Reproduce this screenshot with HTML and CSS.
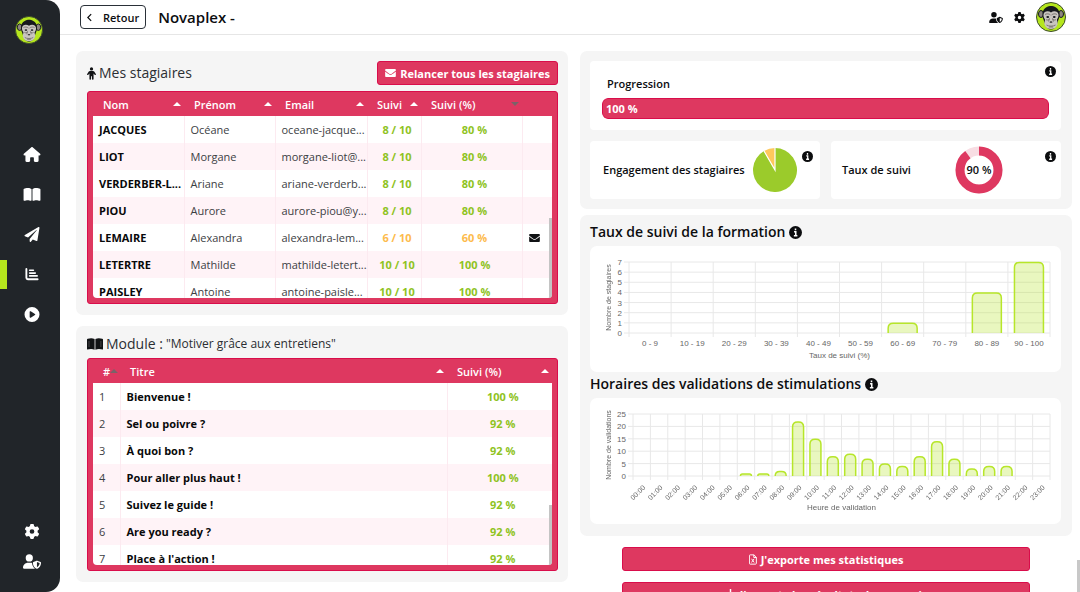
FILE: index.html
```html
<!DOCTYPE html>
<html lang="fr">
<head>
<meta charset="utf-8">
<title>Novaplex - Statistiques</title>
<meta name="viewport" content="width=device-width, initial-scale=1">
<link rel="stylesheet" href="styles.css">
</head>
<body>
<svg class="sprite" aria-hidden="true">
  <symbol id="i-home" viewBox="0 0 576 512"><path d="M575.8 255.5c0 18-15 32.1-32 32.1h-32l.7 160.2c0 2.7-.2 5.4-.5 8.1V472c0 22.1-17.9 40-40 40H392c-22.1 0-40-17.9-40-40V384c0-17.7-14.3-32-32-32H256c-17.7 0-32 14.3-32 32v88c0 22.1-17.9 40-40 40H104c-22.1 0-40-17.9-40-40V287.600H32c-18 0-32-14-32-32.100c0-9 3-17 10-24L266.400 8c7-7 15-8 22-8s15 2 21 7L564.800 231.500c8 7 12 15 11 24z"/></symbol>
  <symbol id="i-book" viewBox="0 0 576 512"><path d="M249.600 471.500c10.800 3.800 22.400-4.100 22.400-15.500V78.600c0-4.200-1.600-8.400-5-11C247.400 52 202.400 32 144 32C93.500 32 46.300 45.300 18.100 56.100C6.800 60.500 0 71.700 0 83.800V454.100c0 11.900 12.800 20.200 24.100 16.500C55.600 460.100 105.500 448 144 448c33.900 0 79 14 105.600 23.500zm76.800 0C353 462 398.100 448 432 448c38.500 0 88.400 12.100 119.900 22.600c11.300 3.800 24.100-4.600 24.100-16.500V83.800c0-12.100-6.800-23.300-18.100-27.600C529.700 45.300 482.500 32 432 32c-58.400 0-103.400 20-123 35.600c-3.300 2.600-5 6.800-5 11V456c0 11.400 11.700 19.300 22.400 15.500z"/></symbol>
  <symbol id="i-plane" viewBox="0 0 512 512"><path d="M476 3.200L12.500 270.600c-18.100 10.400-15.800 35.600 2.200 43.200L121 358.400l287.300-253.200c5.500-4.900 13.300 2.600 8.600 8.300L176 407v80.500c0 23.600 28.500 32.900 42.500 15.800L282 426l124.600 52.200c14.200 6 30.400-2.900 33-18.200l72-432C515 7.800 493.300-6.800 476 3.200z"/></symbol>
  <symbol id="i-chart" viewBox="0 0 16 16"><path d="M2 2v9.500a1.500 1.500 0 0 0 1.500 1.500H14" fill="none" stroke="currentColor" stroke-width="2" stroke-linecap="round"/><path d="M5.500 3.500h4M5.500 6.500h6M5.500 9.500h8" fill="none" stroke="currentColor" stroke-width="1.700" stroke-linecap="round"/></symbol>
  <symbol id="i-play" viewBox="0 0 512 512"><path fill-rule="evenodd" d="M0 256a256 256 0 1 1 512 0A256 256 0 1 1 0 256zM188.300 147.100c-7.600 4.200-12.300 12.300-12.300 20.900V344c0 8.700 4.700 16.700 12.300 20.900s16.800 4.100 24.300-.5l144-88c7.100-4.400 11.500-12.100 11.500-20.500s-4.400-16.100-11.500-20.500l-144-88c-7.400-4.500-16.700-4.700-24.300-.5z"/></symbol>
  <symbol id="i-gear" viewBox="0 0 512 512"><path fill-rule="evenodd" d="M495.900 166.600c3.200 8.700 .5 18.400-6.400 24.600l-43.300 39.400c1.100 8.300 1.700 16.800 1.700 25.400s-.6 17.100-1.700 25.400l43.300 39.400c6.900 6.200 9.600 15.900 6.400 24.600c-4.400 11.900-9.700 23.300-15.800 34.300l-4.700 8.100c-6.600 11-14 21.400-22.100 31.200c-5.900 7.200-15.700 9.600-24.500 6.800l-55.700-17.700c-13.400 10.300-28.200 18.900-44 25.400l-12.500 57.100c-2 9.100-9 16.300-18.200 17.800c-13.800 2.300-28 3.500-42.500 3.500s-28.700-1.200-42.500-3.500c-9.200-1.500-16.200-8.700-18.200-17.800l-12.500-57.100c-15.800-6.500-30.600-15.100-44-25.400L83.100 425.900c-8.800 2.800-18.600 .3-24.500-6.800c-8.100-9.800-15.500-20.200-22.100-31.200l-4.700-8.100c-6.100-11-11.400-22.400-15.800-34.300c-3.200-8.700-.5-18.400 6.400-24.600l43.300-39.400C64.600 273.100 64 264.600 64 256s.6-17.100 1.700-25.400L22.400 191.200c-6.900-6.200-9.600-15.900-6.400-24.600c4.400-11.900 9.700-23.300 15.800-34.300l4.700-8.100c6.600-11 14-21.400 22.100-31.200c5.900-7.200 15.700-9.600 24.500-6.800l55.700 17.700c13.400-10.300 28.200-18.900 44-25.400l12.500-57.100c2-9.100 9-16.300 18.200-17.800C227.300 1.200 241.500 0 256 0s28.700 1.200 42.500 3.500c9.200 1.500 16.200 8.700 18.200 17.800l12.500 57.100c15.800 6.500 30.600 15.100 44 25.400l55.700-17.700c8.800-2.800 18.600-.3 24.500 6.800c8.100 9.800 15.500 20.200 22.100 31.200l4.700 8.100c6.100 11 11.400 22.400 15.800 34.300zM256 336a80 80 0 1 0 0-160 80 80 0 1 0 0 160z"/></symbol>
  <symbol id="i-shield" viewBox="0 0 640 512"><path fill-rule="evenodd" d="M224 256A128 128 0 1 0 224 0a128 128 0 1 0 0 256zm-45.700 48C79.800 304 0 383.800 0 482.300C0 498.700 13.300 512 29.700 512H418.300c1.800 0 3.500-.2 5.300-.5c-76.300-55.100-99.800-141-103.100-200.200c-16.100-4.800-33.100-7.300-50.700-7.300H178.300zm308.800-78.300l-120 48C358 277.400 352 286.200 352 296c0 63.300 25.900 168.800 134.800 214.200c5.900 2.500 12.600 2.500 18.500 0C614.100 464.800 640 359.300 640 296c0-9.800-6-18.600-15.100-22.300l-120-48c-5.700-2.300-12.100-2.300-17.800 0zM591.400 312c-3.900 50.700-27.200 116.700-95.400 149.700V273.800L591.400 312z"/></symbol>
  <symbol id="i-mail" viewBox="0 64 512 384"><path d="M502.300 190.800c3.900-3.100 9.700-.2 9.700 4.700V400c0 26.500-21.500 48-48 48H48c-26.500 0-48-21.500-48-48V195.600c0-5 5.700-7.800 9.700-4.700 22.400 17.400 52.100 39.500 154.100 113.600 21.100 15.400 56.700 47.800 92.200 47.600 35.700.3 72-32.800 92.300-47.600 102-74.100 131.600-96.300 154-113.700zM256 320c23.200.4 56.600-29.200 73.400-41.400 132.700-96.300 142.800-104.700 173.400-128.700 5.800-4.500 9.200-11.500 9.200-18.900v-19c0-26.500-21.500-48-48-48H48c-26.500 0-48 21.500-48 48v19c0 7.400 3.400 14.300 9.200 18.900 30.600 23.900 40.700 32.400 173.400 128.700 16.800 12.200 50.200 41.800 73.400 41.400z"/></symbol>
  <symbol id="i-person" viewBox="0 0 10 14"><circle cx="5" cy="1.900" r="1.800"/><path d="M3.300 4.200h3.400c.6 0 1 .2 1.300.6l1.800 2.800a.8.800 0 0 1-1.300.9L7.300 6.900V13a.9.900 0 0 1-1.800 0v-3h-1v3a.9.900 0 0 1-1.800 0V6.900L1.500 8.500a.8.800 0 0 1-1.300-.9L2 4.800c.3-.4.700-.6 1.300-.6z"/></symbol>
  <symbol id="i-module" viewBox="0 0 16 12"><path d="M.8.800C3 0 5.500 0 7.600.9v10.800C5.500 10.800 3 10.800 0 11.600V1.600c0-.4.300-.7.800-.8zM15.200.8C13 0 10.500 0 8.400.9v10.800c2.100-.9 4.600-.9 7.600-.1V1.600c0-.4-.3-.7-.8-.8z"/><path d="M2 3v6M13.900 3v6" stroke="#777" stroke-width=".5"/></symbol>
  <symbol id="i-info" viewBox="0 0 16 16"><circle cx="8" cy="8" r="8"/><path d="M8 3v2.300M6.200 7.200h2.100v4.500M6 12h4.300" fill="none" stroke="#fff" stroke-width="1.900"/></symbol>
  <symbol id="i-excel" viewBox="0 0 10 13"><path d="M1.500.7h4.700l3 3v7.600c0 .6-.4 1-1 1H1.500c-.6 0-1-.4-1-1V1.700c0-.6.400-1 1-1zM6 .7V4h3.200M3.200 5.600l3.200 4.600M6.400 5.600L3.200 10.200" fill="none" stroke="currentColor" stroke-width="1.200"/></symbol>
  <symbol id="i-download" viewBox="0 0 12 12"><path d="M6 0v7M3 4.500l3 3 3-3M1 8v3h10V8" fill="none" stroke="currentColor" stroke-width="1.600"/></symbol>
  <symbol id="i-monkey" viewBox="0 0 60 60">
    <circle cx="30" cy="30" r="29" fill="#b5e61d" stroke="#3c4a2c" stroke-width="2"/>
    <ellipse cx="10" cy="24" rx="5" ry="7" fill="#8d8680" stroke="#15181c" stroke-width="2"/>
    <ellipse cx="50" cy="24" rx="5" ry="7" fill="#8d8680" stroke="#15181c" stroke-width="2"/>
    <path d="M30 8c-5 0-16 3-17 15-.3 5 .5 9 2 12l3 9c2 7 7 11 12 11s10-4 12-11l3-9c1.500-3 2.300-7 2-12C46 11 35 8 30 8z" fill="#16191d"/>
    <path d="M30 21c-5-4-14-3-15 4-.4 4 1 7 3 10 0 4-2 6-1 10 2 6 7 9 13 9s11-3 13-9c1-4-1-6-1-10 2-3 3.400-6 3-10-1-7-10-8-15-4z" fill="#c9c5c0"/>
    <path d="M18 25c3-2 8-2 11 1M42 25c-3-2-8-2-11 1M20 35c2 2 5 1 7-1M40 35c-2 2-5 1-7-1M27 33l-2 6M33 33l2 6M21 46c4 3 14 3 18 0M26 50h8" fill="none" stroke="#55504e" stroke-width="1.300"/>
    <ellipse cx="23.500" cy="30" rx="2.800" ry="1.800" fill="#16191d"/><ellipse cx="36.500" cy="30" rx="2.800" ry="1.800" fill="#16191d"/>
    <path d="M27 40c1-2 5-2 6 0l-1 1.500h-4z" fill="#2b2a2a"/>
  </symbol>
</svg>

<div class="app">
  <nav class="side" aria-label="Navigation principale">
    <a class="side-logo" href="#" aria-label="Accueil"><svg><use href="#i-monkey"/></svg></a>
    <div class="side-menu">
      <a class="side-link" href="#" aria-label="Tableau de bord"><svg><use href="#i-home"/></svg></a>
      <a class="side-link" href="#" aria-label="Formations"><svg><use href="#i-book"/></svg></a>
      <a class="side-link" href="#" aria-label="Envois"><svg><use href="#i-plane"/></svg></a>
      <a class="side-link active" href="#" aria-label="Statistiques" aria-current="page"><svg><use href="#i-chart"/></svg></a>
      <a class="side-link" href="#" aria-label="Lecture"><svg><use href="#i-play"/></svg></a>
    </div>
    <div class="side-foot">
      <a class="side-link" href="#" aria-label="Paramètres"><svg><use href="#i-gear"/></svg></a>
      <a class="side-link" href="#" aria-label="Administration"><svg><use href="#i-shield"/></svg></a>
    </div>
  </nav>

  <div class="page">
    <header class="top">
      <button class="back" type="button"><svg viewBox="0 0 6 10"><path d="M5 1L1 5l4 4" fill="none" stroke="currentColor" stroke-width="1.500"/></svg>Retour</button>
      <h1>Novaplex -</h1>
      <div class="top-tools">
        <a class="tool" href="#" aria-label="Administration"><svg class="tool-wide"><use href="#i-shield"/></svg></a>
        <a class="tool" href="#" aria-label="Paramètres"><svg><use href="#i-gear"/></svg></a>
        <a class="avatar" href="#" aria-label="Mon profil"><svg><use href="#i-monkey"/></svg></a>
      </div>
    </header>

    <main class="columns">
      <div class="col-left">
        <section class="panel">
          <div class="panel-head">
            <h2 class="light"><svg class="ic-person"><use href="#i-person"/></svg>Mes stagiaires</h2>
            <button class="btn" type="button"><svg class="ic-mail"><use href="#i-mail"/></svg>Relancer tous les stagiaires</button>
          </div>
          <div class="grid-box">
            <div class="grid-scroll">
              <table class="trainees">
                <colgroup><col class="c-nom"><col class="c-prenom"><col class="c-email"><col class="c-suivi"><col class="c-taux"><col></colgroup>
                <thead><tr>
                  <th scope="col"><button type="button">Nom<i class="up"></i></button></th>
                  <th scope="col"><button type="button">Prénom<i class="up"></i></button></th>
                  <th scope="col"><button type="button">Email<i class="up"></i></button></th>
                  <th scope="col"><button type="button">Suivi<i class="up"></i></button></th>
                  <th scope="col"><button type="button">Suivi (%)<i class="down"></i></button></th>
                  <th></th>
                </tr></thead>
                <tbody>
                  <tr><td class="strong">JACQUES</td><td>Océane</td><td>oceane-jacque...</td><td class="good">8 / 10</td><td class="good">80 %</td><td></td></tr>
                  <tr><td class="strong">LIOT</td><td>Morgane</td><td>morgane-liot@...</td><td class="good">8 / 10</td><td class="good">80 %</td><td></td></tr>
                  <tr><td class="strong">VERDERBER-L...</td><td>Ariane</td><td>ariane-verderb...</td><td class="good">8 / 10</td><td class="good">80 %</td><td></td></tr>
                  <tr><td class="strong">PIOU</td><td>Aurore</td><td>aurore-piou@y...</td><td class="good">8 / 10</td><td class="good">80 %</td><td></td></tr>
                  <tr><td class="strong">LEMAIRE</td><td>Alexandra</td><td>alexandra-lem...</td><td class="mid">6 / 10</td><td class="mid">60 %</td><td><button class="row-mail" type="button" aria-label="Relancer"><svg class="ic-mail"><use href="#i-mail"/></svg></button></td></tr>
                  <tr><td class="strong">LETERTRE</td><td>Mathilde</td><td>mathilde-letert...</td><td class="good">10 / 10</td><td class="good">100 %</td><td></td></tr>
                  <tr><td class="strong">PAISLEY</td><td>Antoine</td><td>antoine-paisle...</td><td class="good">10 / 10</td><td class="good">100 %</td><td></td></tr>
                </tbody>
              </table>
            </div>
            <span class="thumb"></span>
          </div>
        </section>

        <section class="panel">
          <div class="panel-head low">
            <h2 class="light"><svg class="ic-module"><use href="#i-module"/></svg>Module : <span class="module-name">"Motiver grâce aux entretiens"</span></h2>
          </div>
          <div class="grid-box">
            <div class="grid-scroll">
              <table class="modules">
                <colgroup><col class="c-num"><col><col class="c-score"></colgroup>
                <thead><tr>
                  <th scope="col"><button type="button">#<i class="up dim"></i></button></th>
                  <th scope="col"><button type="button">Titre<i class="up"></i></button></th>
                  <th scope="col"><button type="button">Suivi (%)<i class="up"></i></button></th>
                </tr></thead>
                <tbody>
                  <tr><td>1</td><td class="strong">Bienvenue !</td><td class="good">100 %</td></tr>
                  <tr><td>2</td><td class="strong">Sel ou poivre ?</td><td class="good">92 %</td></tr>
                  <tr><td>3</td><td class="strong">À quoi bon ?</td><td class="good">92 %</td></tr>
                  <tr><td>4</td><td class="strong">Pour aller plus haut !</td><td class="good">100 %</td></tr>
                  <tr><td>5</td><td class="strong">Suivez le guide !</td><td class="good">92 %</td></tr>
                  <tr><td>6</td><td class="strong">Are you ready ?</td><td class="good">92 %</td></tr>
                  <tr><td>7</td><td class="strong">Place à l'action !</td><td class="good">92 %</td></tr>
                </tbody>
              </table>
            </div>
            <span class="thumb short"></span>
          </div>
        </section>
      </div>

      <div class="col-right">
        <section class="panel summary">
          <div class="card progress-card">
            <span class="label" id="prog">Progression</span>
            <div class="bar" role="progressbar" aria-labelledby="prog" aria-valuenow="100"><div class="bar-fill" style="width:100%">100 %</div></div>
            <svg class="info"><use href="#i-info"/></svg>
          </div>
          <div class="card stat engagement">
            <span class="label">Engagement des stagiaires</span>
            <svg class="pie" viewBox="-22 -22 44 44" role="img" aria-label="Engagement">
              <path d="M0 0V-22A22 22 0 1 1 -11 -19.050Z" fill="#9bcb2b"/>
              <path d="M0 0L-11 -19.050A22 22 0 0 1 0 -22Z" fill="#fec85c"/>
              <path d="M0 -22V0L-11 -19.050" fill="none" stroke="#fff" stroke-width="1.200"/>
            </svg>
            <svg class="info low"><use href="#i-info"/></svg>
          </div>
          <div class="card stat follow">
            <span class="label">Taux de suivi</span>
            <svg class="donut" viewBox="-24 -24 48 48" role="img" aria-label="90 %">
              <circle r="19" fill="none" stroke="#f8dde3" stroke-width="9"/>
              <circle r="19" fill="none" stroke="#de3860" stroke-width="9" pathLength="100" stroke-dasharray="90 10" transform="rotate(-90)"/>
              <text y="4" text-anchor="middle">90 %</text>
            </svg>
            <svg class="info low"><use href="#i-info"/></svg>
          </div>
        </section>

        <section class="panel charts">
          <h2>Taux de suivi de la formation <svg class="ic-info"><use href="#i-info"/></svg></h2>
          <div class="card chart-card"><svg class="chart" id="rates" viewBox="0 0 471 126"></svg></div>
          <h2>Horaires des validations de stimulations <svg class="ic-info"><use href="#i-info"/></svg></h2>
          <div class="card chart-card"><svg class="chart" id="hours" viewBox="0 0 471 126"></svg></div>
        </section>

        <div class="exports">
          <button class="btn" type="button"><svg class="ic-file"><use href="#i-excel"/></svg>J'exporte mes statistiques</button>
          <button class="btn" type="button"><svg class="ic-down"><use href="#i-download"/></svg>J'exporte les résultats de mes quiz</button>
        </div>
      </div>
    </main>
  </div>
  <span class="page-thumb"></span>
</div>
<script src="charts.js"></script>
</body>
</html>
```

FILE: styles.css
```css
:root {
  --pink: #de3860;
  --pink-edge: #d90d4b;
  --dark: #212529;
  --green: #8fc31f;
  --lime: #b7e62a;
}

* { box-sizing: border-box; }

body {
  margin: 0;
  background: #fff;
  color: #0c0d0f;
  font: 400 11px/17px "Open Sans", "Noto Sans", sans-serif;
}

h1, h2 { margin: 0; font-weight: 600; }
button { font: inherit; color: inherit; border: 0; padding: 0; background: none; cursor: pointer; }
svg { display: block; flex: none; fill: currentColor; }
a { color: inherit; }

.sprite { position: absolute; width: 0; height: 0; }

.app { display: flex; height: 100vh; overflow: hidden; position: relative; }

/* Sidebar */
.side {
  flex: none;
  display: flex;
  flex-direction: column;
  width: 60px;
  padding: 16px 0;
  background: var(--dark);
  border-radius: 0 14px 14px 0;
  color: #fff;
}
.side-logo { padding-left: 15px; }
.side-logo svg { width: 28px; height: 28px; }
.side-menu { margin-top: 90px; }
.side-foot { margin-top: auto; }
.side-link {
  position: relative;
  display: flex;
  align-items: center;
  justify-content: center;
  height: 40px;
  padding-left: 3px;
}
.side-foot .side-link { height: 30px; }
.side-link svg { width: 18px; height: 15px; }
.side-link.active::before {
  content: "";
  position: absolute;
  left: 0;
  top: 6px;
  width: 7px;
  height: 29px;
  background: #b5e61d;
}

/* Header */
.page { flex: 1; min-width: 0; }
.top {
  display: flex;
  align-items: center;
  height: 35px;
  padding: 0 14px 0 20px;
  border-bottom: 1px solid #e6e6e6;
}
.back {
  display: flex;
  align-items: center;
  gap: 11px;
  height: 24px;
  padding: 0 6px;
  border: 1px solid #2a3038;
  border-radius: 4px;
  font-weight: 600;
}
.back svg { width: 5px; height: 9px; }
.top h1 { margin-left: 12px; font-size: 15px; line-height: 20px; }
.top-tools { display: flex; align-items: center; gap: 11px; margin-left: auto; }
.top-tools svg { width: 11px; height: 11px; }
.top-tools .tool-wide { width: 14px; }
.top-tools .avatar svg { width: 30px; height: 30px; }

/* Layout */
.columns {
  display: grid;
  grid-template-columns: 1fr 1fr;
  gap: 12px;
  padding: 16px 8px 0 16px;
}
.col-left { display: flex; flex-direction: column; gap: 11px; min-width: 0; }
.col-right { display: flex; flex-direction: column; gap: 6px; min-width: 0; }
.panel { background: #f5f5f5; border-radius: 7px; padding: 10px 10px 11px 11px; }
.panel-head { display: flex; align-items: center; justify-content: space-between; height: 24px; margin-bottom: 6px; }
.panel-head.low { height: 16px; }
.light { display: flex; align-items: center; gap: 3px; font-weight: 400; font-size: 14px; line-height: 20px; color: #2b2e32; white-space: nowrap; }
.module-name { font-size: 12px; }
.ic-person { width: 9px; height: 13px; color: #101214; }
.ic-module { width: 16px; height: 12px; color: #101214; }
.ic-mail { width: 11px; height: 8px; }
.ic-file { width: 8px; height: 11px; }
.ic-down { width: 11px; height: 11px; }
.btn {
  display: flex;
  align-items: center;
  justify-content: center;
  height: 24px;
  padding: 0 7px;
  gap: 4px;
  background: var(--pink);
  border: 1px solid var(--pink-edge);
  border-radius: 3px;
  color: #fff;
  font-weight: 700;
  white-space: nowrap;
}

/* Tables */
.grid-box { position: relative; padding: 0 5px 5px; background: var(--pink); border: 1px solid var(--pink-edge); border-radius: 3px; }
.grid-scroll { height: 206px; overflow-y: auto; scrollbar-width: none; border-radius: 0 0 4px 4px; }
.thumb { position: absolute; right: 5px; bottom: 5px; width: 3px; height: 80px; background: #c4c4c4; border-radius: 0 0 3px 0; }
.thumb.short { height: 60px; }
table { width: 100%; border-collapse: collapse; table-layout: fixed; background: #fff; }
.c-nom, .c-prenom { width: 91px; }
.c-email { width: 92px; }
.c-suivi { width: 54px; }
.c-taux { width: 101px; }
.c-num { width: 27px; }
.c-score { width: 105px; }
th { position: sticky; top: 0; height: 24px; padding: 0 3px 0 10px; background: var(--pink); color: #fff; font-weight: 600; }
th button { display: flex; align-items: center; justify-content: space-between; width: 100%; white-space: nowrap; }
td { height: 27px; padding: 0 0 0 6px; color: #3c4043; white-space: nowrap; }
td + td { border-left: 1px solid #fceaf0; }
tbody tr:nth-child(even) { background: #fff3f7; }
.strong { color: #08090a; font-weight: 700; }
.good, .mid { font-weight: 700; text-align: center; }
.good { color: var(--green); }
.mid { color: #fdbb4c; }
.row-mail { display: block; color: #101214; }
.up, .down { flex: none; width: 8px; border: 4px solid transparent; }
.up { border-top: 0; border-bottom-color: #fff; }
.down { border-bottom: 0; border-top-color: #7a6268; }
.dim { border-bottom-color: #7a6268; }

/* Summary cards */
.summary { display: grid; grid-template-columns: 1fr 1fr; gap: 11px; padding: 10px 11px 10px 10px; }
.card { position: relative; background: #fff; border-radius: 4px; }
.label { font-weight: 600; white-space: nowrap; }
.progress-card { grid-column: 1 / -1; display: flex; flex-direction: column; gap: 6px; padding: 14px 12px 11px; }
.progress-card .label { padding-left: 5px; }
.bar { height: 21px; border-radius: 6px; overflow: hidden; background: #f8dde3; }
.bar-fill { height: 100%; padding-left: 3px; line-height: 19px; background: var(--pink); border: 1px solid var(--pink-edge); border-radius: 6px; color: #fff; font-weight: 700; }
.stat { display: flex; align-items: center; justify-content: space-between; height: 58px; padding: 0 58px 1px 11px; }
.stat.engagement { padding: 0 23px 1px 13px; }
.pie { width: 44px; height: 44px; }
.donut { width: 48px; height: 48px; }
.donut text { font: 600 11px "Open Sans", sans-serif; }
.info { position: absolute; top: 5px; right: 5px; width: 11px; height: 11px; }
.info.low { top: 10px; }
.engagement .info { right: 7px; }

/* Charts */
.charts { padding: 7px 11px 12px 10px; }
.charts h2 { display: flex; align-items: center; gap: 4px; font-size: 14px; line-height: 20px; margin-bottom: 4px; }
.charts .chart-card + h2 { margin: 2px 0 4px; }
.ic-info { width: 13px; height: 13px; }
.chart-card { border-radius: 7px; }
.chart { width: 100%; height: auto; }
.chart text { font: 8px "Liberation Sans", Arial, sans-serif; fill: #666; }
.chart .small { font-size: 7px; }
.chart .line { stroke: #e8e8e8; stroke-width: 1; }
.chart .fill { fill: var(--lime); fill-opacity: .3; }
.chart .edge { fill: none; stroke: var(--lime); stroke-width: 1.5; }

.exports { display: flex; flex-direction: column; gap: 11px; width: 83%; margin: 5px auto 0; }
.page-thumb { position: absolute; right: 0; bottom: 0; width: 3px; height: 32px; background: #c8c8c8; }
```

FILE: charts.js
```javascript
const NS = "http://www.w3.org/2000/svg";

function add(svg, tag, attrs, text) {
  const el = document.createElementNS(NS, tag);
  for (const key in attrs) el.setAttribute(key, attrs[key]);
  if (text !== undefined) el.textContent = text;
  svg.appendChild(el);
}

function drawChart(id, o) {
  const svg = document.getElementById(id);
  const right = 460;
  const top = 16;
  const step = (right - o.left) / o.values.length;
  const y = v => o.bottom - (v / o.max) * (o.bottom - top);
  const line = (x1, y1, x2, y2) => add(svg, "line", { x1, y1, x2, y2, class: "line" });

  for (let v = 0; v <= o.max; v += o.tick) {
    line(o.left - 5, y(v), right, y(v));
    add(svg, "text", { x: o.left - 7, y: y(v) + 3, "text-anchor": "end" }, v);
  }
  for (let i = 0; i <= o.values.length; i++) {
    line(o.left + i * step, top, o.left + i * step, o.bottom + 4);
  }
  o.values.forEach((v, i) => {
    const cx = o.left + (i + 0.5) * step;
    if (v) {
      const a = cx - o.bar / 2, b = cx + o.bar / 2, t = y(v) + 0.5;
      const r = Math.min(o.radius, o.bottom - t);
      const d = `M${a} ${o.bottom}V${t + r}Q${a} ${t} ${a + r} ${t}H${b - r}Q${b} ${t} ${b} ${t + r}V${o.bottom}`;
      add(svg, "path", { d, class: "fill" });
      add(svg, "path", { d, class: "edge" });
    }
    if (o.slanted) {
      const lx = cx + 4, ly = o.bottom + 12;
      add(svg, "text", { x: lx, y: ly, "text-anchor": "end", class: "small", transform: `rotate(-45 ${lx} ${ly})` }, o.labels[i]);
    } else {
      add(svg, "text", { x: cx, y: o.bottom + 13, "text-anchor": "middle" }, o.labels[i]);
    }
  });
  add(svg, "text", { x: (o.left + right) / 2, y: 112, "text-anchor": "middle" }, o.xTitle);
  const my = (top + o.bottom) / 2;
  add(svg, "text", { x: 21, y: my, "text-anchor": "middle", class: "small", transform: `rotate(-90 21 ${my})` }, o.yTitle);
}

drawChart("rates", {
  left: 39, bottom: 87, max: 7, tick: 1, bar: 29, radius: 5,
  values: [0, 0, 0, 0, 0, 0, 1, 0, 4, 7],
  labels: ["0 - 9", "10 - 19", "20 - 29", "30 - 39", "40 - 49", "50 - 59", "60 - 69", "70 - 79", "80 - 89", "90 - 100"],
  xTitle: "Taux de suivi (%)", yTitle: "Nombre de stagiaires"
});

drawChart("hours", {
  left: 43, bottom: 78, max: 25, tick: 5, bar: 11, radius: 5, slanted: true,
  values: [0, 0, 0, 0, 0, 0, 1, 1, 2, 22, 15, 8, 9, 7, 5, 4, 8, 14, 7, 3, 4, 4, 0, 0],
  labels: Array.from({ length: 24 }, (_, h) => String(h).padStart(2, "0") + ":00"),
  xTitle: "Heure de validation", yTitle: "Nombre de validations"
});
```
